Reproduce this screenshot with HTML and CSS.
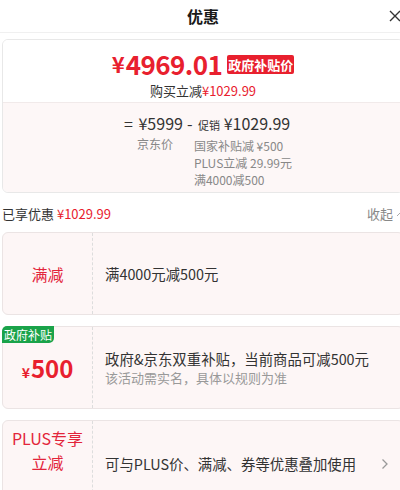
FILE: index.html
```html
<!DOCTYPE html>
<html lang="zh">
<head>
<meta charset="utf-8">
<link rel="stylesheet" href="styles.css">
</head>
<body>
<div class="page">
  <div class="header">
    <span class="title">优惠</span>
    <svg class="close" width="12" height="12" viewBox="0 0 12 12"><path d="M1 1 L11 11 M11 1 L1 11" stroke="#333" stroke-width="1.4" fill="none"/></svg>
  </div>

  <div class="summary">
    <div class="summary-top">
      <div class="price-line">
        <span class="yen">¥</span><span class="price">4969.01</span><span class="tag">政府补贴价</span>
      </div>
      <div class="save-line">购买立减<span class="red">¥1029.99</span></div>
    </div>
    <div class="summary-bottom">
      <div class="calc">
        <div class="calc-col">
          <div class="calc-main"><span class="op">=</span> ¥5999</div>
          <div class="calc-sub first">京东价</div>
        </div>
        <div class="calc-col">
          <div class="calc-main"><span class="op">-</span> <span class="small">促销</span> ¥1029.99</div>
          <div class="calc-sub list">
            <div>国家补贴减 ¥500</div>
            <div>PLUS立减 29.99元</div>
            <div>满4000减500</div>
          </div>
        </div>
      </div>
    </div>
  </div>

  <div class="enjoyed">
    <div>已享优惠 <span class="red">¥1029.99</span></div>
    <div class="fold">收起<svg class="up" width="8" height="6" viewBox="0 0 8 6"><path d="M1 5 L4 2 L7 5" fill="none" stroke="#aaa" stroke-width="1"/></svg></div>
  </div>

  <div class="card">
    <div class="card-left"><span class="left-label">满减</span></div>
    <div class="card-right"><div class="main-text">满4000元减500元</div></div>
  </div>

  <div class="card">
    <span class="gov-badge">政府补贴</span>
    <div class="card-left"><span class="amount"><span class="amount-yen">¥</span>500</span></div>
    <div class="card-right">
      <div class="main-text">政府&amp;京东双重补贴，当前商品可减500元</div>
      <div class="sub-text">该活动需实名，具体以规则为准</div>
    </div>
  </div>

  <div class="card tall">
    <div class="card-left top"><span class="left-label">PLUS专享<br>立减</span></div>
    <div class="card-right row">
      <div class="main-text">可与PLUS价、满减、券等优惠叠加使用</div>
      <svg class="chev" width="8" height="12" viewBox="0 0 8 12"><path d="M1.5 1.5 L6 6 L1.5 10.5" fill="none" stroke="#999" stroke-width="1.3"/></svg>
    </div>
  </div>
</div>
</body>
</html>
```

FILE: styles.css
```css
html, body {
  margin: 0;
  padding: 0;
  overflow: hidden;
  background: #fff;
}
body {
  font-family: "Noto Sans CJK SC", "Noto Sans", sans-serif;
  color: #333;
  width: 400px;
  height: 490px;
}
.page {
  width: 406px;
}
.header {
  height: 32px;
  display: flex;
  align-items: center;
  justify-content: center;
  position: relative;
  border-bottom: 1px solid #f0f0f0;
}
.title {
  font-size: 16px;
  font-weight: bold;
  color: #1a1a1a;
}
.close {
  position: absolute;
  left: 389px;
  top: 10px;
}
.summary {
  margin: 6px 2px 0;
  border: 1px solid #e8e8e8;
  border-radius: 6px;
  overflow: hidden;
}
.summary-top {
  background: #fff;
  height: 62px;
  display: flex;
  flex-direction: column;
  align-items: center;
  border-bottom: 1px solid #f1eaea;
}
.price-line {
  display: flex;
  align-items: center;
  height: 36px;
  margin-top: 5px;
  color: #e8202e;
  font-weight: bold;
}
.yen {
  font-size: 22px;
  margin-right: 1px;
}
.price {
  font-size: 26px;
  letter-spacing: -0.6px;
}
.tag {
  background: #e8202e;
  color: #fff;
  font-size: 13px;
  line-height: 19px;
  padding: 0 1px;
  border-radius: 2px;
  margin-left: 5px;
  margin-top: 2px;
}
.save-line {
  font-size: 13px;
  line-height: 19px;
  color: #333;
}
.red {
  color: #e8202e;
}
.summary-bottom {
  background: #fdf7f7;
  height: 89px;
  display: flex;
  justify-content: center;
}
.calc {
  display: flex;
  gap: 4px;
  padding-top: 9px;
  margin-left: 10px;
}
.calc-main {
  font-size: 16px;
  line-height: 23px;
  color: #333;
  white-space: nowrap;
}
.op {
  margin-right: 2px;
}
.small {
  font-size: 11px;
}
.calc-sub {
  font-size: 12px;
  line-height: 17px;
  color: #888;
}
.calc-sub.first {
  padding-left: 13px;
}
.calc-sub.list {
  padding-left: 7px;
}
.enjoyed {
  height: 39px;
  display: flex;
  align-items: center;
  justify-content: space-between;
  font-size: 13px;
  padding: 2px 2px 0;
  box-sizing: border-box;
  color: #333;
}
.fold {
  color: #888;
  display: flex;
  align-items: center;
  gap: 3px;
}
.card {
  position: relative;
  margin: 0 2px 11px;
  height: 81px;
  border: 1px solid #ebe4e4;
  border-radius: 6px;
  background: #fdf6f6;
  display: flex;
}
.card.tall {
  height: 86px;
}
.card-left {
  width: 89px;
  flex: none;
  border-right: 1px dashed #ddd;
  display: flex;
  align-items: center;
  justify-content: center;
  text-align: center;
}
.card-left.top {
  align-items: flex-start;
  padding-top: 5px;
}
.left-label {
  color: #e3243a;
  font-size: 16px;
  line-height: 24px;
}
.amount {
  color: #e8202e;
  font-weight: bold;
  font-size: 24px;
}
.amount-yen {
  font-size: 14px;
  margin-right: 1px;
}
.card-right {
  flex: 1;
  display: flex;
  flex-direction: column;
  justify-content: center;
  padding-left: 12px;
}
.card-right.row {
  flex-direction: row;
  align-items: center;
  justify-content: space-between;
  padding-right: 14px;
}
.main-text {
  font-size: 14.4px;
  line-height: 20px;
  color: #333;
}
.sub-text {
  font-size: 13px;
  line-height: 18px;
  color: #999;
}
.gov-badge {
  position: absolute;
  left: -1px;
  top: -1px;
  background: #1aa34a;
  color: #fff;
  font-size: 12px;
  line-height: 17px;
  padding: 0 2px;
  border-radius: 5px 0 5px 0;
}
```
